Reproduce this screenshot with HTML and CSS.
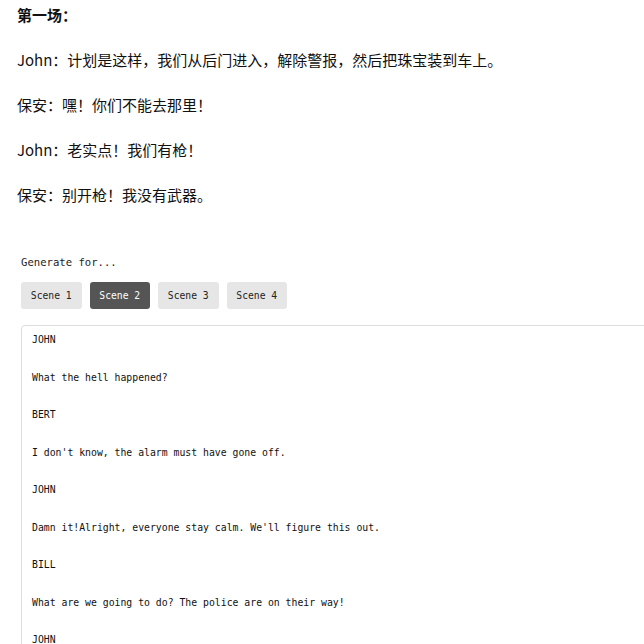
FILE: index.html
```html
<!DOCTYPE html>
<html lang="zh-CN">
<head>
    <meta charset="UTF-8">
    <meta name="viewport" content="width=device-width, initial-scale=1">
    <title>Scene generator</title>
    <link rel="stylesheet" href="styles.css">
</head>
<body>
    <!-- 原始剧本 -->
    <div class="script">
        <p class="scene-title">第一场：</p>
        <p>John：计划是这样，我们从后门进入，解除警报，然后把珠宝装到车上。</p>
        <p>保安：嘿！你们不能去那里！</p>
        <p>John：老实点！我们有枪！</p>
        <p>保安：别开枪！我没有武器。</p>
    </div>

    <!-- 生成区 -->
    <div class="generator">
        <div class="label">Generate for...</div>
        <div class="tabs">
            <button class="tab">Scene 1</button>
            <button class="tab active">Scene 2</button>
            <button class="tab">Scene 3</button>
            <button class="tab">Scene 4</button>
        </div>
        <div class="output">JOHN

What the hell happened?

BERT

I don't know, the alarm must have gone off.

JOHN

Damn it!Alright, everyone stay calm. We'll figure this out.

BILL

What are we going to do? The police are on their way!

JOHN</div>
    </div>
</body>
</html>
```

FILE: styles.css
```css
html, body {
    overflow: hidden;
}

body {
    margin: 0;
    background: white;
    color: #111;
    font-family: "Noto Sans CJK SC", "Noto Sans", sans-serif;
}

.script {
    padding: 0 17px;
}

.script p {
    margin: 0 0 16px;
    font-size: 15px;
    line-height: 29px;
}

.scene-title {
    font-weight: bold;
}

.generator {
    padding: 29px 0 0 21px;
    font-family: "DejaVu Sans Mono", "Liberation Mono", monospace;
}

.label {
    font-size: 10.6px;
    line-height: 16px;
    color: #222;
}

.tabs {
    display: flex;
    gap: 8px;
    margin-top: 12px;
}

.tab {
    width: 60.5px;
    height: 27px;
    padding: 0;
    border: none;
    border-radius: 3px;
    background: #e6e6e6;
    color: #222;
    font-family: inherit;
    font-size: 9.7px;
}

.tab.active {
    background: #555;
    color: white;
}

.output {
    width: 700px;
    margin-top: 16px;
    padding: 5px 10px 20px;
    border: 1px solid #ddd;
    border-radius: 4px;
    white-space: pre-wrap;
    font-size: 9.8px;
    line-height: 18.75px;
    color: #111;
}
```
